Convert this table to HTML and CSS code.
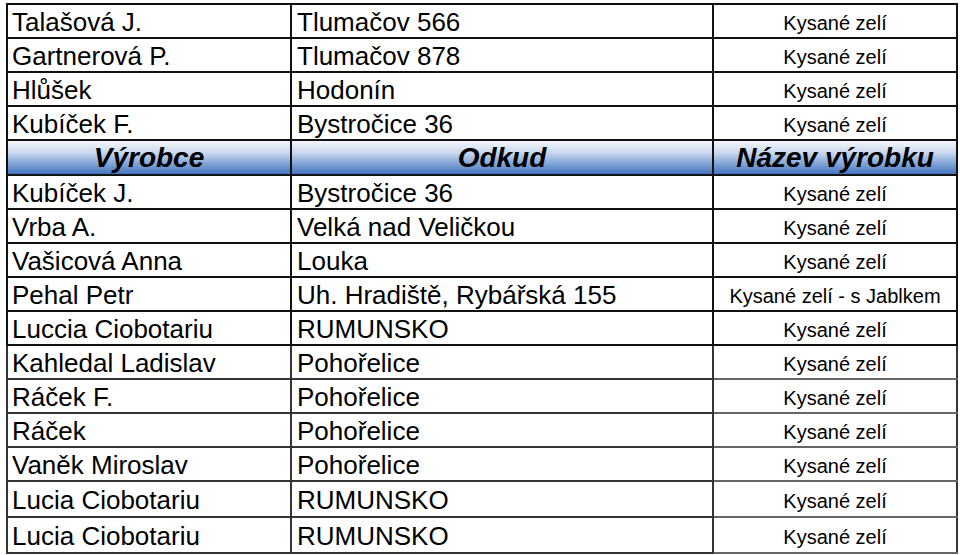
FILE: index.html
```html
<!DOCTYPE html>
<html lang="cs">
<head>
<meta charset="utf-8">
<link rel="stylesheet" href="styles.css">
<title>Výrobci</title>
</head>
<body>
<table class="grid">
<colgroup><col class="c1"><col class="c2"><col class="c3"></colgroup>
<tbody>
<tr><td class="name">Talašová J.</td><td class="place">Tlumačov 566</td><td class="prod">Kysané zelí</td></tr>
<tr><td class="name">Gartnerová P.</td><td class="place">Tlumačov 878</td><td class="prod">Kysané zelí</td></tr>
<tr><td class="name">Hlůšek</td><td class="place">Hodonín</td><td class="prod">Kysané zelí</td></tr>
<tr><td class="name">Kubíček F.</td><td class="place">Bystročice 36</td><td class="prod">Kysané zelí</td></tr>
<tr class="head"><th>Výrobce</th><th>Odkud</th><th>Název výrobku</th></tr>
<tr><td class="name">Kubíček J.</td><td class="place">Bystročice 36</td><td class="prod">Kysané zelí</td></tr>
<tr><td class="name">Vrba A.</td><td class="place">Velká nad Veličkou</td><td class="prod">Kysané zelí</td></tr>
<tr><td class="name">Vašicová Anna</td><td class="place">Louka</td><td class="prod">Kysané zelí</td></tr>
<tr><td class="name">Pehal Petr</td><td class="place">Uh. Hradiště, Rybářská 155</td><td class="prod">Kysané zelí - s Jablkem</td></tr>
<tr><td class="name">Luccia Ciobotariu</td><td class="place">RUMUNSKO</td><td class="prod">Kysané zelí</td></tr>
<tr class="soft"><td class="name">Kahledal Ladislav</td><td class="place">Pohořelice</td><td class="prod">Kysané zelí</td></tr>
<tr class="soft"><td class="name">Ráček F.</td><td class="place">Pohořelice</td><td class="prod">Kysané zelí</td></tr>
<tr class="soft"><td class="name">Ráček</td><td class="place">Pohořelice</td><td class="prod">Kysané zelí</td></tr>
<tr class="soft"><td class="name">Vaněk Miroslav</td><td class="place">Pohořelice</td><td class="prod">Kysané zelí</td></tr>
<tr class="soft tall"><td class="name">Lucia Ciobotariu</td><td class="place">RUMUNSKO</td><td class="prod">Kysané zelí</td></tr>
<tr class="soft tall"><td class="name">Lucia Ciobotariu</td><td class="place">RUMUNSKO</td><td class="prod">Kysané zelí</td></tr>
</tbody>
</table>
</body>
</html>
```
FILE: styles.css
```css
html, body {
  margin: 0;
  padding: 0;
  background: #ffffff;
}
body {
  padding: 3px 0 0 6px;
  font-family: "Liberation Sans", Arial, Helvetica, sans-serif;
  color: #000;
}
.grid {
  border-collapse: collapse;
  width: 950px;
  table-layout: fixed;
}
.c1 { width: 284px; }
.c2 { width: 422px; }
.c3 { width: 244px; }
.grid td, .grid th {
  border: 2px solid #111;
  height: 29px;
  padding: 3px 0 0 0;
  line-height: 29px;
  white-space: nowrap;
  overflow: hidden;
  vertical-align: middle;
}
.grid td.name {
  font-size: 26px;
  padding-left: 4px;
}
.grid td.place {
  font-size: 26px;
  padding-left: 5px;
}
.grid td.prod {
  font-size: 20px;
  text-align: center;
  padding-top: 4px;
  height: 28px;
  line-height: 28px;
}
.head th {
  font-size: 28px;
  font-weight: bold;
  font-style: italic;
  text-align: center;
  height: 32px;
  line-height: 32px;
  padding-top: 1px;
  background: linear-gradient(to bottom, #f4f7fc 0%, #c9d8ee 35%, #7fa3d6 70%, #4474bd 100%);
}
.soft td {
  border-color: #333;
}
.soft td.prod {
  border-top-color: #666;
  border-bottom-color: #666;
}
.tall td {
  height: 31px;
  line-height: 31px;
}
.tall td.prod {
  height: 30px;
  line-height: 30px;
}
```
